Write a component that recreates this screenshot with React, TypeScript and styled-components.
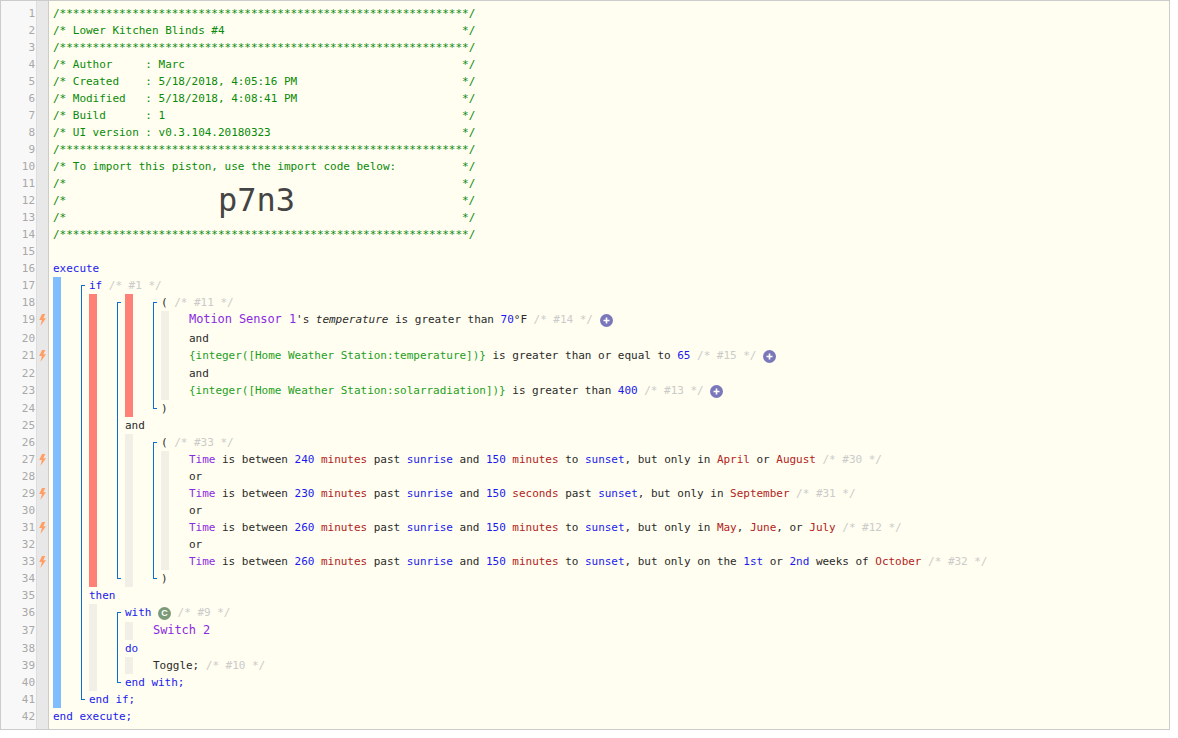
import React from "react";
import styled, { createGlobalStyle } from "styled-components";

const Global = createGlobalStyle`
  html, body { margin: 0; padding: 0; background: #fff; }
  #root { width: 1170px; }
`;

const MONO = `"DejaVu Sans Mono", "Liberation Mono", monospace`;

const Frame = styled.div`
  display: flex;
  box-sizing: border-box;
  width: 1170px;
  height: 730px;
  border: 1px solid #ccc;
  background: #fffef0;
  font: 11px/17px ${MONO};
  letter-spacing: -0.025px;
  white-space: pre;
  color: #2a2a2a;
`;

const Numbers = styled.div`
  flex: none;
  box-sizing: border-box;
  width: 36px;
  padding: 4px 1px 0 0;
  background: #f8f8f8;
  border-right: 1px solid #ddd;
  color: #a8a8a8;
  text-align: right;
`;

const Marks = styled.div`
  flex: none;
  box-sizing: border-box;
  width: 12px;
  padding-top: 4px;
  background: #e8e8e8;
  border-right: 1px solid #ccc;
  color: #ff9f66;
`;

const Cell = styled.div<{ $h: number }>`
  height: ${(p) => p.$h}px;
`;

const MarkCell = styled(Cell)`
  display: flex;
  padding: 3px 0 0 2px;
  box-sizing: border-box;
`;

const Code = styled.div`
  flex: 1;
  padding: 4px 0 0 4px;
`;

const Line = styled.div<{ $h?: number }>`
  height: ${(p) => p.$h ?? 17}px;
`;

const Nest = styled.div`
  display: flex;
`;

const BAR = { blue: "#80bdff", red: "#ff8077", idle: "#f2f0e6" };

const Bar = styled.div<{ $tone: keyof typeof BAR }>`
  flex: none;
  width: 8px;
  background: ${(p) => BAR[p.$tone]};
`;

const Bracketed = styled.div`
  position: relative;
  flex: 1;
  margin-left: 28px;
  &::before {
    content: "";
    position: absolute;
    left: -8px;
    top: 8px;
    bottom: 8px;
    width: 3px;
    border: 1px solid #0a6fd0;
    border-right: 0;
  }
`;

const Leaf = styled.div`
  flex: 1;
  margin-left: 20px;
`;

const Kw = styled.span`color: #1a1aee;`;
const Cmt = styled.span`color: #cbcbcb;`;
const Dev = styled.span`color: #8a2be2;`;
const Device = styled(Dev)`
  font-size: 12px;
  letter-spacing: -0.09px;
`;
const Num = styled.span`color: #1a1aee;`;
const Unit = styled.span`color: #b22222;`;
const Expr = styled.span`color: #1e9e1e;`;
const Head = styled.span`color: #0a8a0a;`;
const Attr = styled.span`font-style: italic;`;

const BigSlot = styled.span`
  display: inline-block;
  vertical-align: top;
  width: 244px;
  height: 17px;
`;

const BigCode = styled.span`
  font-size: 32px;
  line-height: 17px;
  letter-spacing: 0;
  color: #444;
`;

const Badge = styled.span<{ $color: string }>`
  display: inline-flex;
  align-items: center;
  justify-content: center;
  vertical-align: top;
  width: 13px;
  height: 13px;
  margin-top: 3px;
  border-radius: 50%;
  background: ${(p) => p.$color};
  color: #fff;
  font: bold 9px/13px "Liberation Sans", sans-serif;
`;

const HEIGHTS: Record<number, number> = { 19: 19, 21: 18, 23: 18, 36: 18, 37: 18 };
const heightOf = (n: number) => HEIGHTS[n] ?? 17;
const BOLTS = [19, 21, 27, 29, 31, 33];
const ROWS = Array.from({ length: 42 }, (_, i) => i + 1);

const Bolt = () => (
  <svg width="7" height="12" viewBox="0 0 7 12" aria-hidden="true">
    <path d="M3 0h3.2L4.4 4.2H7L1.4 12l1.5-6H0.2z" fill="currentColor" />
  </svg>
);

const Plus = () => (
  <Badge $color="#7a78bb">
    <svg width="7" height="7" viewBox="0 0 7 7" aria-hidden="true">
      <path d="M3.5 0.5v6M0.5 3.5h6" stroke="#fff" strokeWidth="1.6" />
    </svg>
  </Badge>
);

const STARS = "/" + "*".repeat(62) + "/";
const pad = (s: string) => s.padEnd(62, " ") + "*/";

const header = [
  STARS,
  pad("/* Lower Kitchen Blinds #4"),
  STARS,
  pad("/* Author     : Marc"),
  pad("/* Created    : 5/18/2018, 4:05:16 PM"),
  pad("/* Modified   : 5/18/2018, 4:08:41 PM"),
  pad("/* Build      : 1"),
  pad("/* UI version : v0.3.104.20180323"),
  STARS,
  pad("/* To import this piston, use the import code below:"),
  pad("/*"),
];

const TimeRule = ({
  a,
  au,
  b,
  bu,
  bw,
  children,
  id,
}: {
  a: string;
  au: string;
  b: string;
  bu: string;
  bw: string;
  children: React.ReactNode;
  id: string;
}) => (
  <Line>
    <Dev>Time</Dev> is between <Num>{a}</Num> <Unit>{au}</Unit> past <Num>sunrise</Num> and{" "}
    <Num>{b}</Num> <Unit>{bu}</Unit> {bw} <Num>sunset</Num>, but only {children} <Cmt>/* {id} */</Cmt>
  </Line>
);

export default function App() {
  return (
    <>
      <Global />
      <Frame>
        <Numbers>
          {ROWS.map((n) => (
            <Cell key={n} $h={heightOf(n)}>
              {n}
            </Cell>
          ))}
        </Numbers>
        <Marks>
          {ROWS.map((n) => (
            <MarkCell key={n} $h={heightOf(n)}>
              {BOLTS.includes(n) && <Bolt />}
            </MarkCell>
          ))}
        </Marks>
        <Code>
          {header.map((t, i) => (
            <Line key={i}>
              <Head>{t}</Head>
            </Line>
          ))}
          <Line>
            <Head>{"/*                       "}</Head>
            <BigSlot>
              <BigCode>p7n3</BigCode>
            </BigSlot>
            <Head>*/</Head>
          </Line>
          <Line>
            <Head>{pad("/*")}</Head>
          </Line>
          <Line>
            <Head>{STARS}</Head>
          </Line>
          <Line> </Line>
          <Line>
            <Kw>execute</Kw>
          </Line>
          <Nest>
            <Bar $tone="blue" />
            <Bracketed>
              <Line>
                <Kw>if</Kw> <Cmt>/* #1 */</Cmt>
              </Line>
              <Nest>
                <Bar $tone="red" />
                <Bracketed>
                  <Nest>
                    <Bar $tone="red" />
                    <Bracketed>
                      <Line>
                        ( <Cmt>/* #11 */</Cmt>
                      </Line>
                      <Nest>
                        <Bar $tone="idle" />
                        <Leaf>
                          <Line $h={19}>
                            <Device>Motion Sensor 1</Device>'s <Attr>temperature</Attr> is greater than{" "}
                            <Num>70</Num>°F <Cmt>/* #14 */</Cmt> <Plus />
                          </Line>
                          <Line>and</Line>
                          <Line $h={18}>
                            <Expr>{"{integer([Home Weather Station:temperature])}"}</Expr> is greater
                            than or equal to <Num>65</Num> <Cmt>/* #15 */</Cmt> <Plus />
                          </Line>
                          <Line>and</Line>
                          <Line $h={18}>
                            <Expr>{"{integer([Home Weather Station:solarradiation])}"}</Expr> is
                            greater than <Num>400</Num> <Cmt>/* #13 */</Cmt> <Plus />
                          </Line>
                        </Leaf>
                      </Nest>
                      <Line>)</Line>
                    </Bracketed>
                  </Nest>
                  <Line>and</Line>
                  <Nest>
                    <Bar $tone="idle" />
                    <Bracketed>
                      <Line>
                        ( <Cmt>/* #33 */</Cmt>
                      </Line>
                      <Nest>
                        <Bar $tone="idle" />
                        <Leaf>
                          <TimeRule a="240" au="minutes" b="150" bu="minutes" bw="to" id="#30">
                            in <Unit>April</Unit> or <Unit>August</Unit>
                          </TimeRule>
                          <Line>or</Line>
                          <TimeRule a="230" au="minutes" b="150" bu="seconds" bw="past" id="#31">
                            in <Unit>September</Unit>
                          </TimeRule>
                          <Line>or</Line>
                          <TimeRule a="260" au="minutes" b="150" bu="minutes" bw="to" id="#12">
                            in <Unit>May</Unit>, <Unit>June</Unit>, or <Unit>July</Unit>
                          </TimeRule>
                          <Line>or</Line>
                          <TimeRule a="260" au="minutes" b="150" bu="minutes" bw="to" id="#32">
                            on the <Num>1st</Num> or <Num>2nd</Num> weeks of <Unit>October</Unit>
                          </TimeRule>
                        </Leaf>
                      </Nest>
                      <Line>)</Line>
                    </Bracketed>
                  </Nest>
                </Bracketed>
              </Nest>
              <Line>
                <Kw>then</Kw>
              </Line>
              <Nest>
                <Bar $tone="idle" />
                <Bracketed>
                  <Line $h={18}>
                    <Kw>with</Kw>{" "}
                    <Badge $color="#7a9a78">C</Badge> <Cmt>/* #9 */</Cmt>
                  </Line>
                  <Nest>
                    <Bar $tone="idle" />
                    <Leaf>
                      <Line $h={18}>
                        <Device>Switch 2</Device>
                      </Line>
                    </Leaf>
                  </Nest>
                  <Line>
                    <Kw>do</Kw>
                  </Line>
                  <Nest>
                    <Bar $tone="idle" />
                    <Leaf>
                      <Line>
                        Toggle; <Cmt>/* #10 */</Cmt>
                      </Line>
                    </Leaf>
                  </Nest>
                  <Line>
                    <Kw>end with;</Kw>
                  </Line>
                </Bracketed>
              </Nest>
              <Line>
                <Kw>end if;</Kw>
              </Line>
            </Bracketed>
          </Nest>
          <Line>
            <Kw>end execute;</Kw>
          </Line>
        </Code>
      </Frame>
    </>
  );
}
